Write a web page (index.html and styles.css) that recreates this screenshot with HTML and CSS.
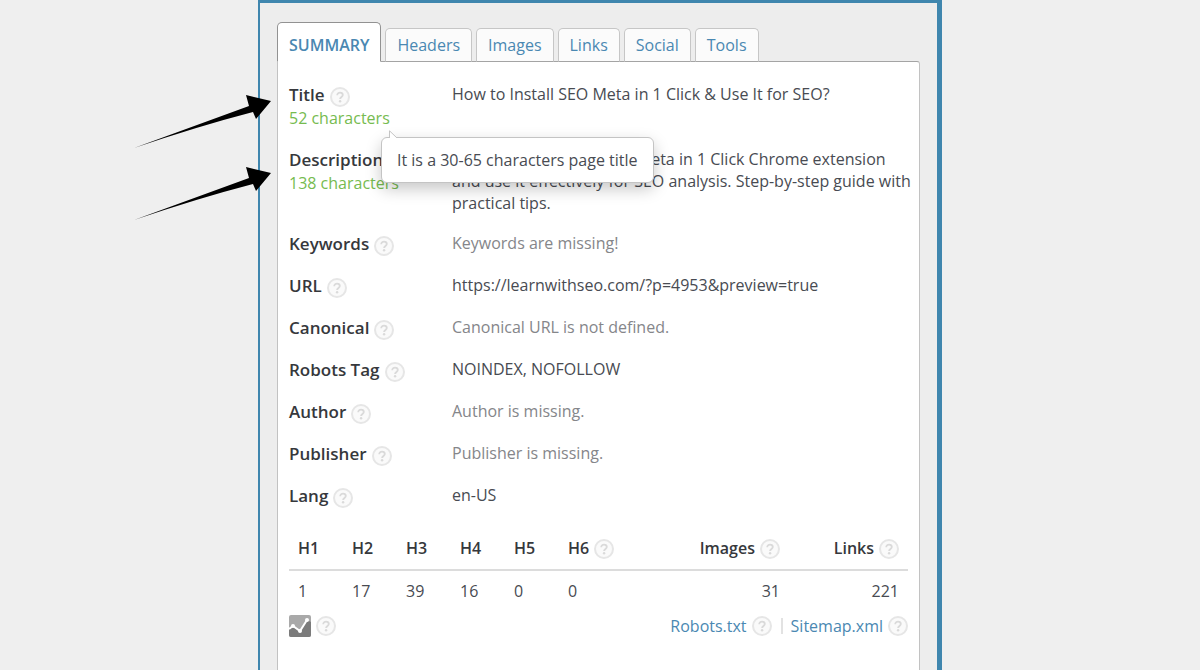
FILE: index.html
```
<!DOCTYPE html>
<html lang="en">

<head>
  <meta charset="utf-8" />
  <title>SEO Meta in 1 Click</title>
  <link rel="stylesheet" href="styles.css">
</head>

<body>
  <svg class="sprite" aria-hidden="true">
    <symbol id="help" viewBox="0 0 20 20">
      <circle cx="10" cy="10" r="9" fill="#fafafa" stroke="#e6e6e6" stroke-width="2" />
      <path d="M7.2 8.2C7.2 6.6 8.4 5.6 10 5.6s2.8 1 2.8 2.4c0 1.900-2.700 2-2.700 4" fill="none" stroke="#dadada" stroke-width="1.800" />
      <circle cx="10.100" cy="14.300" r="1.200" fill="#dadada" />
    </symbol>
    <symbol id="arrow" viewBox="0 0 138 56">
      <path d="M0 54 115 12 112 1 137 7 122 25 119 18Q65 32 0 54Z" />
    </symbol>
  </svg>

  <div class="popup">
    <div class="arrows">
      <svg class="arrow"><use href="#arrow" /></svg>
      <svg class="arrow"><use href="#arrow" /></svg>
    </div>

    <nav class="tabs">
      <a class="tab active" href="#summary">SUMMARY</a>
      <a class="tab" href="#headers">Headers</a>
      <a class="tab" href="#images">Images</a>
      <a class="tab" href="#links">Links</a>
      <a class="tab" href="#social">Social</a>
      <a class="tab" href="#tools">Tools</a>
    </nav>

    <main class="panel" id="summary">
      <dl class="meta">
        <div class="row">
          <dt>
            <span class="label">Title <button class="help" aria-label="About title"><svg><use href="#help" /></svg></button></span>
            <span class="count">52 characters</span>
            <div class="tooltip" role="tooltip">
              <svg class="tip" viewBox="0 0 9 8"><path d="M.5 8V.8L8 8" fill="#fff" stroke="#c4c4c4" /></svg>
              It is a 30-65 characters page title
            </div>
          </dt>
          <dd>How to Install SEO Meta in 1 Click &amp; Use It for SEO?</dd>
        </div>

        <div class="row">
          <dt>
            <span class="label">Description</span>
            <span class="count">138 characters</span>
          </dt>
          <dd>Learn how to install SEO Meta in 1 Click Chrome extension and use it effectively for SEO analysis. Step-by-step guide with practical tips.</dd>
        </div>

        <div class="row">
          <dt><span class="label">Keywords <button class="help" aria-label="About keywords"><svg><use href="#help" /></svg></button></span></dt>
          <dd class="missing">Keywords are missing!</dd>
        </div>

        <div class="row">
          <dt><span class="label">URL <button class="help" aria-label="About URL"><svg><use href="#help" /></svg></button></span></dt>
          <dd>https://learnwithseo.com/?p=4953&amp;preview=true</dd>
        </div>

        <div class="row">
          <dt><span class="label">Canonical <button class="help" aria-label="About canonical"><svg><use href="#help" /></svg></button></span></dt>
          <dd class="missing">Canonical URL is not defined.</dd>
        </div>

        <div class="row">
          <dt><span class="label">Robots Tag <button class="help" aria-label="About robots tag"><svg><use href="#help" /></svg></button></span></dt>
          <dd>NOINDEX, NOFOLLOW</dd>
        </div>

        <div class="row">
          <dt><span class="label">Author <button class="help" aria-label="About author"><svg><use href="#help" /></svg></button></span></dt>
          <dd class="missing">Author is missing.</dd>
        </div>

        <div class="row">
          <dt><span class="label">Publisher <button class="help" aria-label="About publisher"><svg><use href="#help" /></svg></button></span></dt>
          <dd class="missing">Publisher is missing.</dd>
        </div>

        <div class="row">
          <dt><span class="label">Lang <button class="help" aria-label="About lang"><svg><use href="#help" /></svg></button></span></dt>
          <dd>en-US</dd>
        </div>
      </dl>

      <table class="counts">
        <thead>
          <tr>
            <th>H1</th>
            <th>H2</th>
            <th>H3</th>
            <th>H4</th>
            <th>H5</th>
            <th class="wide"><span class="label">H6 <button class="help" aria-label="About headings"><svg><use href="#help" /></svg></button></span></th>
            <th class="num"><span class="label">Images <button class="help" aria-label="About images"><svg><use href="#help" /></svg></button></span></th>
            <th class="num"><span class="label">Links <button class="help" aria-label="About links"><svg><use href="#help" /></svg></button></span></th>
          </tr>
        </thead>
        <tbody>
          <tr>
            <td>1</td>
            <td>17</td>
            <td>39</td>
            <td>16</td>
            <td>0</td>
            <td>0</td>
            <td class="num">31</td>
            <td class="num">221</td>
          </tr>
        </tbody>
      </table>

      <footer class="bottom">
        <button class="chart" aria-label="Traffic">
          <svg viewBox="0 0 22 22">
            <rect width="22" height="22" rx="2" fill="#a9a9a9" />
            <path d="M0 14 4 11 11 16 18 5 22 7V20a2 2 0 0 1-2 2H2a2 2 0 0 1-2-2Z" fill="#7b7b7b" />
            <path d="M0 14 4 11 11 16 18 5" fill="none" stroke="#fff" stroke-width="2" />
            <circle cx="4" cy="11" r="2" fill="#fff" />
            <circle cx="11" cy="16" r="2" fill="#fff" />
            <circle cx="18" cy="5" r="2" fill="#fff" />
          </svg>
        </button>
        <button class="help" aria-label="About traffic"><svg><use href="#help" /></svg></button>
        <div class="files">
          <a href="#robots">Robots.txt</a>
          <button class="help" aria-label="About robots.txt"><svg><use href="#help" /></svg></button>
          <span class="divider"></span>
          <a href="#sitemap">Sitemap.xml</a>
          <button class="help" aria-label="About sitemap.xml"><svg><use href="#help" /></svg></button>
        </div>
      </footer>
    </main>
  </div>
</body>

</html>
```
FILE: styles.css
```
* {
  box-sizing: border-box;
}

body {
  margin: 0;
  background-color: #efefef;
  color: #484b52;
  font-family: "Open Sans", "Noto Sans", sans-serif;
  font-size: 16px;
  line-height: 22px;
}

a {
  color: #4a88b2;
  text-decoration: none;
}

button {
  padding: 0;
  border: 0;
  background: none;
  cursor: pointer;
}

.sprite {
  display: none;
}

.popup {
  display: flex;
  flex-direction: column;
  position: relative;
  width: 57%;
  min-height: 100vh;
  margin: 0 auto;
  padding: 19px 17px 0;
  border: solid #3f86ae;
  border-width: 3px 5px 0 2px;
  background-color: #ededed;
}

/* tabs */
.tabs {
  display: flex;
  align-items: flex-end;
  gap: 4px;
  margin-bottom: -1px;
  position: relative;
}

.tab {
  height: 34px;
  padding: 5px 11px;
  border: 1px solid #c6c6c6;
  border-bottom-color: #a4a4a4;
  border-radius: 5px 5px 0 0;
  background-color: #fbfbfb;
}

.tab.active {
  height: 40px;
  padding-top: 11px;
  border-color: #929292;
  border-bottom-color: #fff;
  background-color: #fff;
  font-weight: 600;
}

.panel {
  flex: 1;
  padding: 21px 11px 0;
  border: 1px solid #c2c2c2;
  border-top-color: #a4a4a4;
  border-bottom: 0;
  border-radius: 0 3px 0 0;
  background-color: #fff;
}

/* meta list */
.meta {
  margin: 0 -6px 0 0;
}

.row {
  display: flex;
  margin-bottom: 18px;
}

dt {
  flex: 0 0 163px;
  position: relative;
}

dd {
  flex: 1;
  margin: 0;
}

.label {
  display: flex;
  align-items: center;
  gap: 5px;
  height: 24px;
  color: #36383c;
  font-weight: 600;
}

dt .label {
  font-size: 17px;
}

.help {
  flex: none;
  height: 20px;
}

.label .help {
  margin-top: 3px;
}

.help svg {
  display: block;
  width: 20px;
  height: 20px;
}

.count {
  display: block;
  color: #76bb50;
  line-height: 23px;
}

.missing {
  color: #85868a;
}

.tooltip {
  position: absolute;
  top: 54px;
  left: 92px;
  z-index: 1;
  padding: 11px 15px;
  border: 1px solid #c4c4c4;
  border-radius: 6px;
  background-color: #fff;
  box-shadow: 0 6px 16px rgba(0, 0, 0, 0.22);
  white-space: nowrap;
}

.tip {
  position: absolute;
  top: -8px;
  left: 7px;
  width: 9px;
  height: 8px;
}

/* heading counts */
.counts {
  width: 100%;
  table-layout: fixed;
  border-collapse: collapse;
  margin-top: 26px;
}

.counts th,
.counts td {
  width: 54px;
  padding: 0 9px;
  text-align: left;
}

.counts th {
  height: 36px;
  padding-bottom: 8px;
  border-bottom: 2px solid #dcdcdc;
  color: #36383c;
  font-weight: 600;
}

.counts td {
  height: 40px;
}

.counts .wide {
  width: auto;
}

.counts .num {
  width: 119px;
  text-align: right;
}

.num .label {
  justify-content: flex-end;
}

.bottom {
  display: flex;
  align-items: center;
  gap: 5px;
  height: 32px;
}

.chart svg {
  display: block;
  width: 22px;
  height: 22px;
}

.files {
  display: flex;
  align-items: center;
  gap: 5px;
  margin-left: auto;
}

.divider {
  width: 2px;
  height: 16px;
  margin: 0 3px 0 4px;
  background-color: #e2e2e2;
}

/* pointers over the left edge */
.arrows {
  position: absolute;
  top: 91px;
  left: -126px;
  z-index: 2;
}

.arrow {
  display: block;
  width: 138px;
  height: 56px;
  margin-bottom: 16px;
}
```
